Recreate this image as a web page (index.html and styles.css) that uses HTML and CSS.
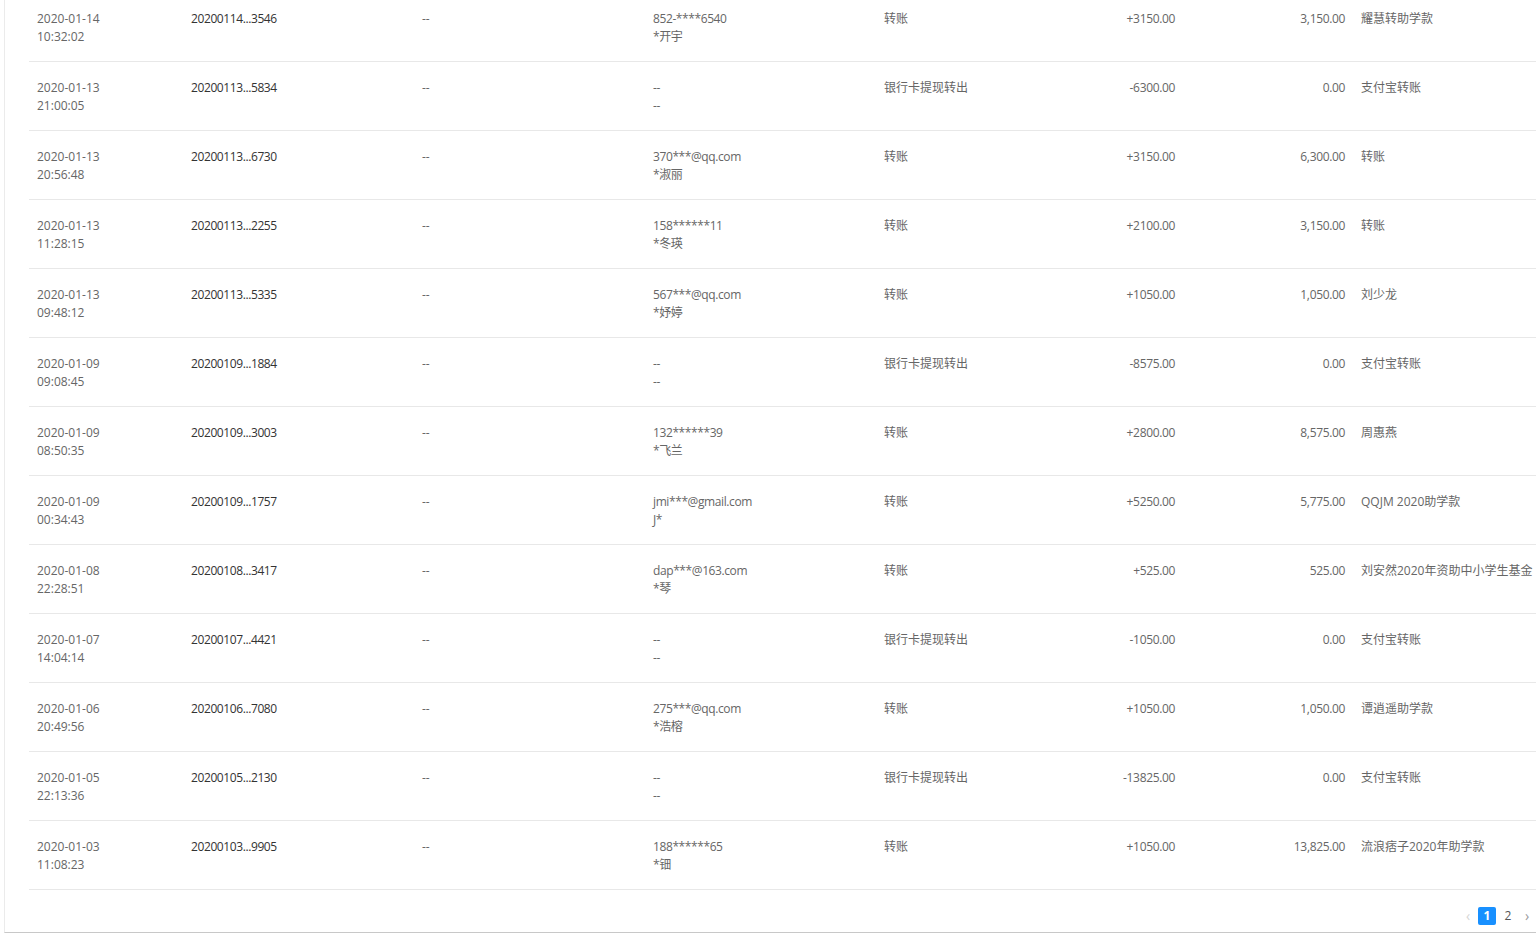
FILE: index.html
```html
<!DOCTYPE html>
<html lang="zh-CN">
<head>
  <meta charset="UTF-8" />
  <title>账单明细</title>
  <link rel="stylesheet" href="styles.css">
</head>
<body>
<div class="page">
  <div class="table-wrap">
    <table class="bill">
      <colgroup>
        <col class="c-date"><col class="c-no"><col class="c-dash"><col class="c-acc">
        <col class="c-type"><col class="c-amt"><col class="c-bal"><col class="c-memo">
      </colgroup>
      <tbody>
        <tr><td>2020-01-14<br>10:32:02</td><td class="no">20200114...3546</td><td>--</td><td class="acc">852-****6540<br>*开宇</td><td>转账</td><td class="num">+3150.00</td><td class="num">3,150.00</td><td>耀慧转助学款</td></tr>
        <tr><td>2020-01-13<br>21:00:05</td><td class="no">20200113...5834</td><td>--</td><td class="acc">--<br>--</td><td>银行卡提现转出</td><td class="num">-6300.00</td><td class="num">0.00</td><td>支付宝转账</td></tr>
        <tr><td>2020-01-13<br>20:56:48</td><td class="no">20200113...6730</td><td>--</td><td class="acc">370***@qq.com<br>*淑丽</td><td>转账</td><td class="num">+3150.00</td><td class="num">6,300.00</td><td>转账</td></tr>
        <tr><td>2020-01-13<br>11:28:15</td><td class="no">20200113...2255</td><td>--</td><td class="acc">158******11<br>*冬瑛</td><td>转账</td><td class="num">+2100.00</td><td class="num">3,150.00</td><td>转账</td></tr>
        <tr><td>2020-01-13<br>09:48:12</td><td class="no">20200113...5335</td><td>--</td><td class="acc">567***@qq.com<br>*妤婷</td><td>转账</td><td class="num">+1050.00</td><td class="num">1,050.00</td><td>刘少龙</td></tr>
        <tr><td>2020-01-09<br>09:08:45</td><td class="no">20200109...1884</td><td>--</td><td class="acc">--<br>--</td><td>银行卡提现转出</td><td class="num">-8575.00</td><td class="num">0.00</td><td>支付宝转账</td></tr>
        <tr><td>2020-01-09<br>08:50:35</td><td class="no">20200109...3003</td><td>--</td><td class="acc">132******39<br>*飞兰</td><td>转账</td><td class="num">+2800.00</td><td class="num">8,575.00</td><td>周惠燕</td></tr>
        <tr><td>2020-01-09<br>00:34:43</td><td class="no">20200109...1757</td><td>--</td><td class="acc">jmi***@gmail.com<br>J*</td><td>转账</td><td class="num">+5250.00</td><td class="num">5,775.00</td><td>QQJM 2020助学款</td></tr>
        <tr><td>2020-01-08<br>22:28:51</td><td class="no">20200108...3417</td><td>--</td><td class="acc">dap***@163.com<br>*琴</td><td>转账</td><td class="num">+525.00</td><td class="num">525.00</td><td>刘安然2020年资助中小学生基金</td></tr>
        <tr><td>2020-01-07<br>14:04:14</td><td class="no">20200107...4421</td><td>--</td><td class="acc">--<br>--</td><td>银行卡提现转出</td><td class="num">-1050.00</td><td class="num">0.00</td><td>支付宝转账</td></tr>
        <tr><td>2020-01-06<br>20:49:56</td><td class="no">20200106...7080</td><td>--</td><td class="acc">275***@qq.com<br>*浩榕</td><td>转账</td><td class="num">+1050.00</td><td class="num">1,050.00</td><td>谭逍遥助学款</td></tr>
        <tr><td>2020-01-05<br>22:13:36</td><td class="no">20200105...2130</td><td>--</td><td class="acc">--<br>--</td><td>银行卡提现转出</td><td class="num">-13825.00</td><td class="num">0.00</td><td>支付宝转账</td></tr>
        <tr><td>2020-01-03<br>11:08:23</td><td class="no">20200103...9905</td><td>--</td><td class="acc">188******65<br>*钿</td><td>转账</td><td class="num">+1050.00</td><td class="num">13,825.00</td><td>流浪痞子2020年助学款</td></tr>
      </tbody>
    </table>
  </div>
  <div class="pager">
    <span class="pg-arrow disabled">&lsaquo;</span>
    <span class="pg-item active">1</span>
    <span class="pg-item">2</span>
    <span class="pg-arrow">&rsaquo;</span>
  </div>
</div>
</body>
</html>
```

FILE: styles.css
```css
html, body {
  margin: 0;
  padding: 0;
  background: #fff;
  overflow: hidden;
}
body {
  font-family: "Open Sans", "Noto Sans CJK SC", sans-serif;
  font-size: 12px;
  color: #666;
}
.page {
  box-sizing: border-box;
  height: 933px;
  margin-left: 4px;
  border-left: 1px solid #ebebeb;
  border-bottom: 1px solid #c8c8c8;
  padding-left: 24px;
  overflow: hidden;
}
.table-wrap {
  margin-top: -7px;
}
.bill {
  width: 1507px;
  border-collapse: collapse;
  table-layout: fixed;
}
.c-date { width: 154px; }
.c-no { width: 231px; }
.c-dash { width: 231px; }
.c-acc { width: 231px; }
.c-type { width: 137px; }
.c-amt { width: 170px; }
.c-bal { width: 170px; }
.c-memo { width: 183px; }
.bill td {
  padding: 17px 8px 15px;
  line-height: 18px;
  height: 36px;
  vertical-align: top;
  border-bottom: 1px solid #e8e8e8;
  white-space: nowrap;
}
.bill td.no {
  color: #333;
  letter-spacing: -0.4px;
}
.bill td.acc {
  letter-spacing: -0.4px;
}
.bill td.num {
  text-align: right;
  letter-spacing: -0.35px;
}
.pager {
  display: flex;
  justify-content: flex-end;
  align-items: center;
  gap: 3px;
  margin-top: 17px;
  padding-right: 2px;
}
.pg-item, .pg-arrow {
  min-width: 18px;
  height: 18px;
  line-height: 18px;
  text-align: center;
  border-radius: 2px;
  font-size: 12px;
  color: #555;
}
.pg-arrow {
  min-width: 14px;
  font-size: 14px;
  color: #999;
}
.pg-arrow.disabled {
  color: #d6d6d6;
}
.pg-item.active {
  background: #1890ff;
  color: #fff;
  font-weight: bold;
}
```
